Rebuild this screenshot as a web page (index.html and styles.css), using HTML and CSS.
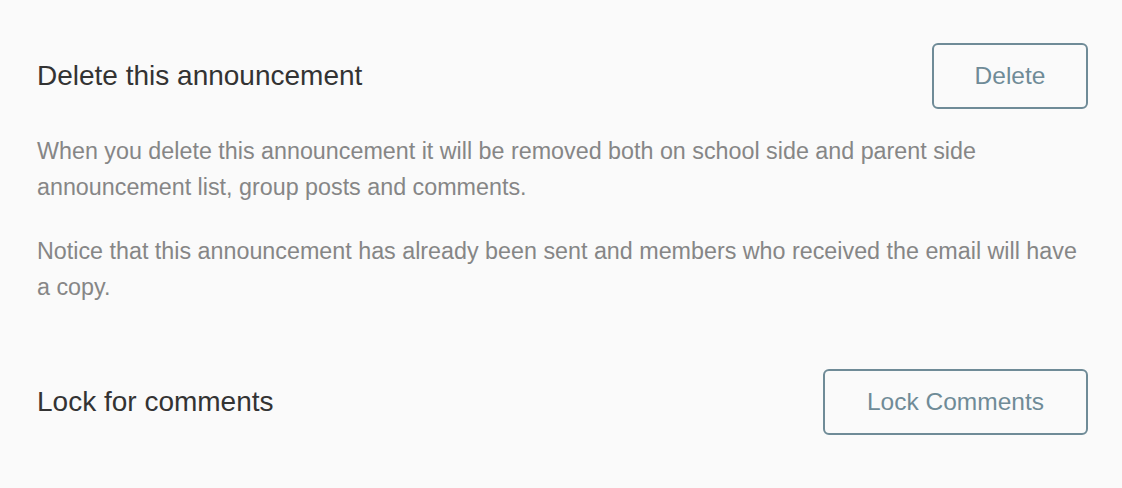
FILE: index.html
```html
<!DOCTYPE html>
<html>
	<head>
		<meta charset="utf-8">
		<link rel="stylesheet" href="styles.css">
	</head>
	<body>
		<div id="container">
			<div class="section">
				<div class="sectionHead">
					<h2 class="title">Delete this announcement</h2>
					<div class="btn btnDelete">Delete</div>
				</div>
				<p class="note">When you delete this announcement it will be removed both on school side and parent side announcement list, group posts and comments.</p>
				<p class="note">Notice that this announcement has already been sent and members who received the email will have a copy.</p>
			</div>
			<div class="section">
				<div class="sectionHead">
					<h2 class="title">Lock for comments</h2>
					<div class="btn btnLock">Lock Comments</div>
				</div>
			</div>
		</div>
	</body>
</html>
```

FILE: styles.css
```css
html, body{
	margin:0;
	background-color:#fafafa;
	font-family:"Liberation Sans", Arial, Helvetica, sans-serif;
}

#container{
	padding:43px 34px 0 37px;
}

.section{
	margin-bottom:64px;
}

.sectionHead{
	display:flex;
	align-items:center;
	justify-content:space-between;
}

.title{
	margin:0;
	font-size:28px;
	font-weight:normal;
	color:#333;
}

.btn{
	box-sizing:border-box;
	border:2px solid #6f8b97;
	border-radius:6px;
	color:#6f8b97;
	font-size:24.5px;
	text-align:center;
	cursor:pointer;
	height:66px;
	line-height:62px;
}

.btnDelete{
	width:156px;
}

.btnLock{
	width:265px;
}

.note{
	margin:24px 0 0 0;
	font-size:23.3px;
	line-height:36px;
	color:#868686;
}

.note + .note{
	margin-top:28px;
}
```
